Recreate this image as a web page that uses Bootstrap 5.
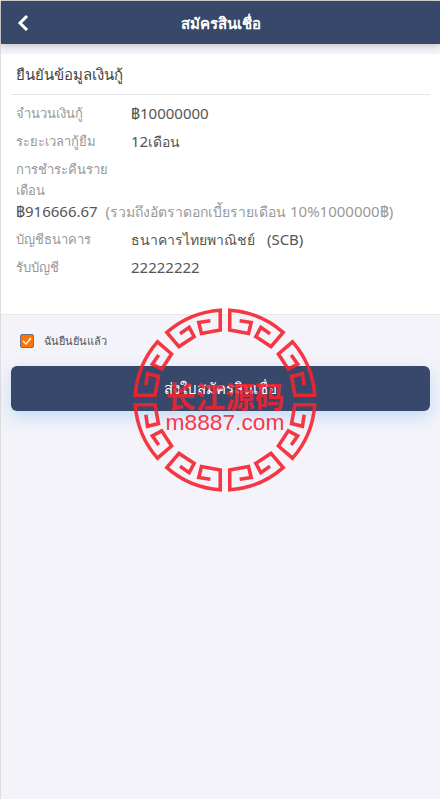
<!DOCTYPE html>
<html lang="th">
<head>
<meta charset="utf-8">
<meta name="viewport" content="width=device-width, initial-scale=1">
<title>สมัครสินเชื่อ</title>
<link href="https://cdn.jsdelivr.net/npm/bootstrap@5.3.0/dist/css/bootstrap.min.css" rel="stylesheet">
<style>
body { font-family: "Noto Sans", "Open Sans", sans-serif; font-size: 15px; line-height: 21px; background: #f3f3f9; color: #555; }
.screen { border-top: 1px solid #ddd; border-left: 1px solid #ddd; }
.topbar { height: 43px; background: #38486a; box-shadow: 0 1px 8px rgba(0,0,0,.25); }
.topbar h1 { font-size: 15px; line-height: 24px; font-weight: 700; }
.side { width: 44px; }
.panel { margin-top: 10px; padding: 0 10px 36px; border-bottom: 1px solid #e9e9ec; }
.panel h2 { font-size: 15px; line-height: 20px; padding: 10px 5px; color: #444; border-bottom: 1px solid #e5e5e5; }
.facts { padding: 8px 5px 0; gap: 7px; }
.term { width: 115px; font-weight: 400; color: #999; font-size: 13px; }
.thai { font-size: 14px; }
.note { color: #999; }
.agree { padding: 15px 19px; font-size: 11px; gap: 10px; }
.agree .form-check-input { width: 14px; height: 14px; margin: 0; border-radius: 2px; border-color: #66758a; }
.agree .form-check-input:checked { background-color: #ff7400; background-image: none; }
.tick { display: grid; }
.tick > * { grid-area: 1 / 1; }
.tick svg { z-index: 1; pointer-events: none; visibility: hidden; }
.tick input:checked + svg { visibility: visible; }
.submit { margin: 0 10px; height: 45px; border-radius: 6px; font-size: 15px; color: #fff; background: #38486a; box-shadow: 0 6px 16px rgba(110,175,240,.35); }
.submit:hover { color: #fff; background: #303f5e; }
.seal { top: 307px; left: 50%; width: 184px; margin-left: -88px; pointer-events: none; }
</style>
<script src="https://cdn.jsdelivr.net/npm/bootstrap@5.3.0/dist/js/bootstrap.bundle.min.js"></script>
</head>
<body>
<div class="screen position-relative min-vh-100 d-flex flex-column">
  <header class="topbar d-flex align-items-center text-white">
    <button type="button" class="side btn p-0 border-0 d-flex justify-content-center" aria-label="ย้อนกลับ">
      <svg width="14" height="18" viewBox="0 0 14 18" fill="none" stroke="#fff" stroke-width="3"><path d="M11 2 4 9l7 7"/></svg>
    </button>
    <h1 class="flex-grow-1 text-center m-0">สมัครสินเชื่อ</h1>
    <span class="side"></span>
  </header>
  <main>
    <section class="panel bg-white">
      <h2 class="m-0 fw-normal">ยืนยันข้อมูลเงินกู้</h2>
      <dl class="facts d-flex flex-column m-0">
        <div class="d-flex"><dt class="term">จำนวนเงินกู้</dt><dd class="m-0">฿10000000</dd></div>
        <div class="d-flex"><dt class="term">ระยะเวลากู้ยืม</dt><dd class="m-0">12<span class="thai">เดือน</span></dd></div>
        <div><dt class="term">การชำระคืนราย<br>เดือน</dt><dd class="m-0 text-nowrap">฿916666.67 <span class="note ms-1">(<span class="thai">รวมถึงอัตราดอกเบี้ยรายเดือน</span> 10%1000000฿)</span></dd></div>
        <div class="d-flex"><dt class="term">บัญชีธนาคาร</dt><dd class="m-0"><span class="thai">ธนาคารไทยพาณิชย์</span> <span class="ms-2">(SCB)</span></dd></div>
        <div class="d-flex"><dt class="term">รับบัญชี</dt><dd class="m-0">22222222</dd></div>
      </dl>
    </section>
    <div class="agree d-flex align-items-center">
      <span class="tick">
        <input class="form-check-input" type="checkbox" id="agree" checked>
        <svg width="14" height="14" viewBox="0 0 14 14" fill="none" stroke="#fff" stroke-width="1.3"><path d="m3 7 3 3 5-6"/></svg>
      </span>
      <label for="agree">ฉันยืนยันแล้ว</label>
    </div>
    <div class="d-grid"><button type="button" class="submit btn p-0 border-0">ส่งใบสมัครสินเชื่อ</button></div>
  </main>
  <svg class="seal position-absolute" viewBox="-93 -93 186 186" fill="none" stroke="#f5222f" stroke-opacity=".9" stroke-width="3.6">
    <defs>
      <path id="fret" d="M45.5-67 36.2-73.5 31.2-64 46.5-54 58.8-68.3A91 91 0 0 0 4.8-90.7V-70.7L23.8-67.3 26.5-78.3 14.8-80"/>
      <g id="quarter"><use href="#fret"/><use href="#fret" transform="matrix(0 -1 -1 0 0 0)"/></g>
    </defs>
    <use href="#quarter"/><use href="#quarter" transform="scale(-1 1)"/><use href="#quarter" transform="scale(1 -1)"/><use href="#quarter" transform="scale(-1 -1)"/>
    <g fill="#f5222f" fill-opacity=".9" stroke="none" text-anchor="middle">
      <text y="8" font-family="'Noto Sans CJK SC', sans-serif" font-size="30" font-weight="700">长江源码</text>
      <text y="30" font-family="'Liberation Sans', sans-serif" font-size="23">m8887.com</text>
    </g>
  </svg>
</div>
</body>
</html>
